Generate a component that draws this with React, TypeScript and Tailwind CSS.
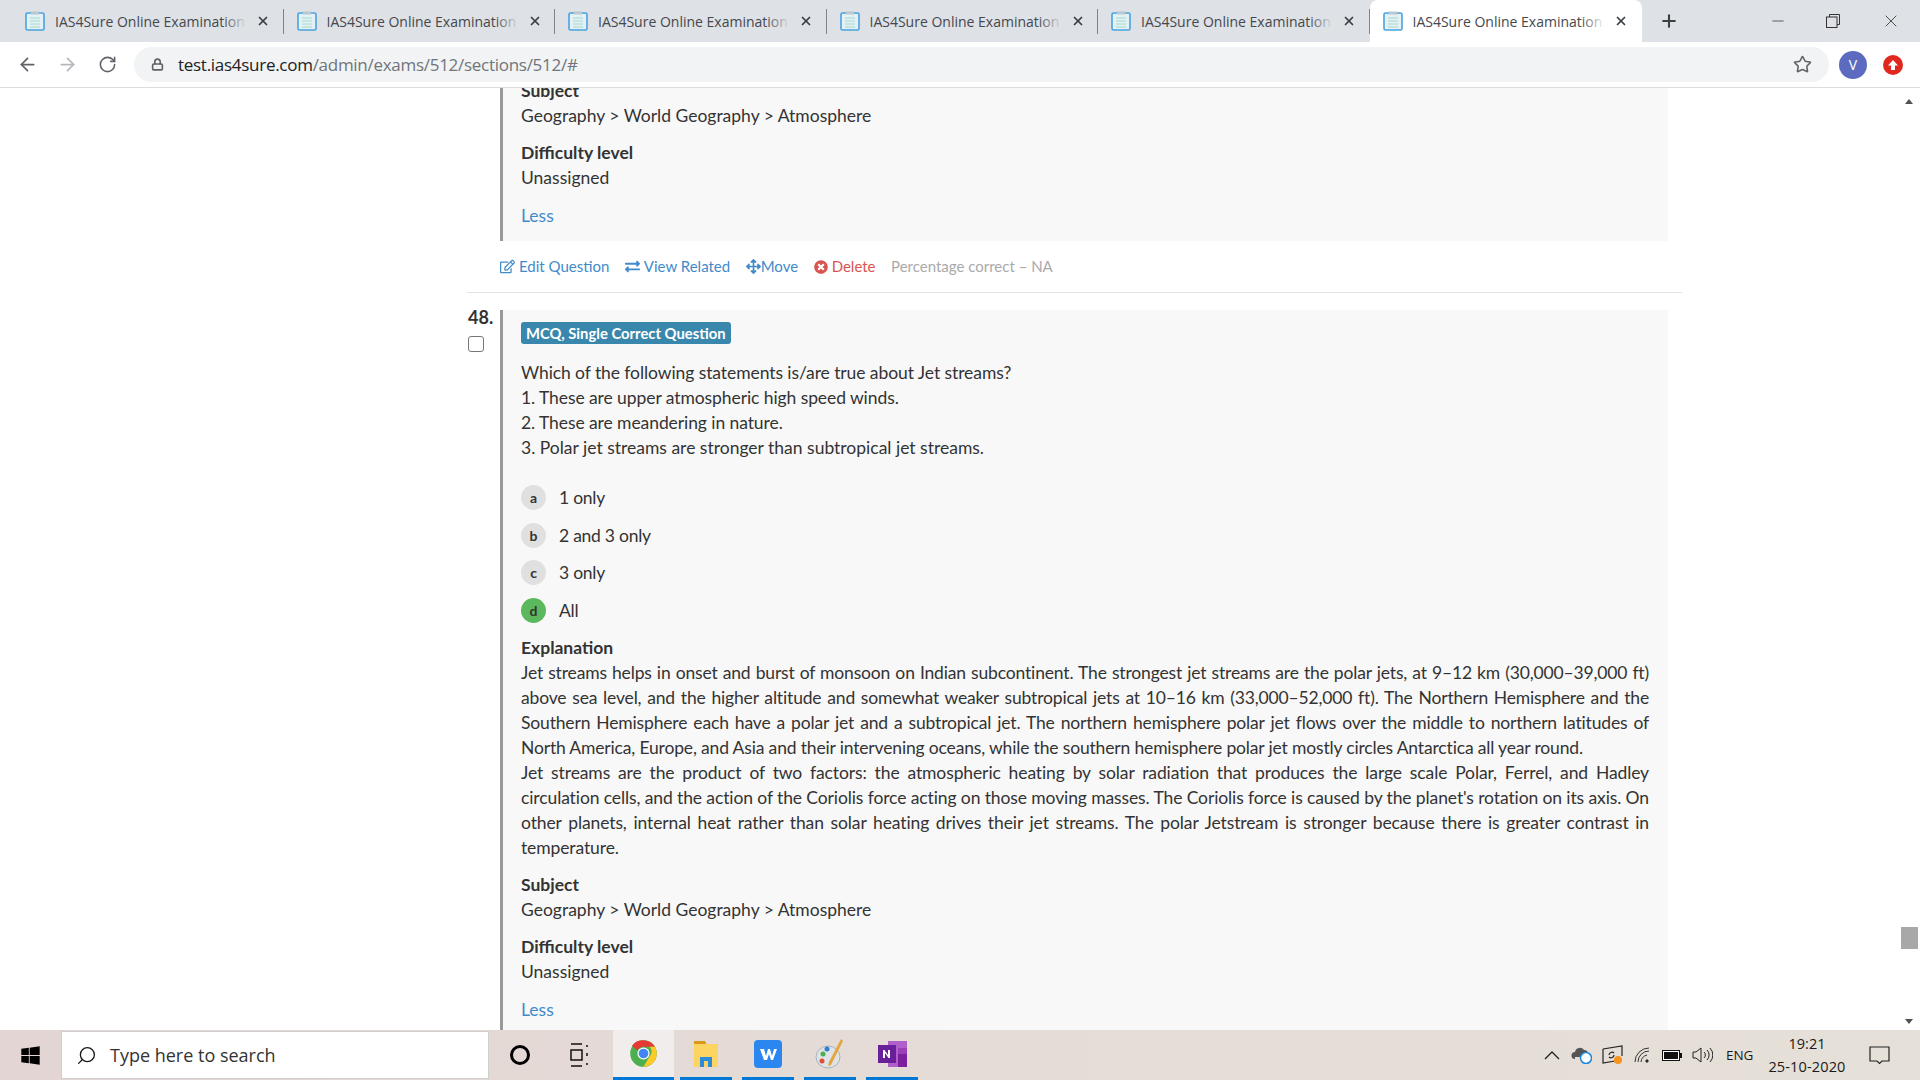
import type { ReactNode } from "react";
import { ArrowLeft, ArrowRight, Lock, Minus, Plus, RotateCw, Search, Star, X } from "lucide-react";
import { FaArrowsAlt, FaExchangeAlt, FaRegEdit, FaTimesCircle, FaWindows } from "react-icons/fa";

function Favicon() {
  return (
    <svg width="20" height="20" viewBox="0 0 20 20" className="shrink-0">
      <rect x="1" y="2" width="18" height="17" rx="1.5" fill="#e3f1f6" stroke="#4aa3de" strokeWidth="1.6" />
      <rect x="6" y="0.5" width="8" height="3" fill="#b9c9d2" />
      <path d="M5 7h10M5 10h10M5 13h10M5 16h10" stroke="#a6d8c8" strokeWidth="1" />
    </svg>
  );
}

function Tab({ active }: { active?: boolean }) {
  return (
    <div className={active ? "relative flex h-[42px] w-[272px] shrink-0 items-center rounded-t-lg bg-white pl-[13px]" : "relative flex h-[42px] w-[271.5px] shrink-0 items-center pl-[13px]"}>
      <Favicon />
      <div className="relative ml-[10px] w-[192px] overflow-hidden whitespace-nowrap text-[14px] text-[#45484d] font-['Open_Sans',sans-serif]">
        IAS4Sure Online Examination
        <div className={active ? "absolute inset-y-0 right-0 w-6 bg-gradient-to-r from-transparent to-white" : "absolute inset-y-0 right-0 w-6 bg-gradient-to-r from-transparent to-[#dee1e6]"} />
      </div>
      <X size={14} strokeWidth={3} className="ml-[9px] text-[#3c4043]" />
      {!active && <div className="absolute right-0 top-[9px] h-[25px] w-px bg-[#7f8388]" />}
    </div>
  );
}

function Browser() {
  return (
    <div className="shrink-0">
      <div className="flex h-[42px] items-end bg-[#dee1e6] pl-[12px]">
        <Tab />
        <Tab />
        <Tab />
        <Tab />
        <Tab />
        <Tab active />
        <Plus size={20} strokeWidth={2.5} className="ml-[17px] mb-[11px] text-[#3c4043]" />
        <div className="ml-auto flex h-full items-center">
          <Minus size={18} strokeWidth={1} className="mr-[39px] text-[#333]" />
          <svg width="14" height="14" viewBox="0 0 14 14" className="mr-[41px]" fill="none" stroke="#333">
            <path d="M3.5 3V.5h10v10H11" />
            <rect x=".5" y="3" width="10.5" height="10.5" />
          </svg>
          <X size={20} strokeWidth={1} className="mr-[19px] text-[#333]" />
        </div>
      </div>
      <div className="flex h-[46px] items-center border-b border-b-[#dadce0] bg-white pr-[17px]">
        <ArrowLeft size={21} className="ml-[17px] text-[#5f6368]" />
        <ArrowRight size={21} className="ml-[19px] text-[#b4b7bb]" />
        <RotateCw size={19} className="ml-[20px] text-[#5f6368]" />
        <div className="ml-[17px] flex h-[35px] flex-1 items-center rounded-full bg-[#f1f3f4] pl-[17px] pr-[17px]">
          <Lock size={13} strokeWidth={3} className="text-[#5f6368]" />
          <div className="ml-[14px] text-[17px] text-[#70757a] font-['Open_Sans',sans-serif] tracking-[-0.28px]">
            <span className="text-[#202124]">test.ias4sure.com</span>/admin/exams/512/sections/512/#
          </div>
          <Star size={19} className="ml-auto text-[#5f6368]" />
        </div>
        <div className="ml-[10px] flex h-[28px] w-[28px] items-center justify-center rounded-full bg-[#5c6bc0] text-[14px] text-white font-['Open_Sans',sans-serif]">V</div>
        <div className="ml-[16px] flex h-[20px] w-[20px] items-center justify-center rounded-full bg-[#e0281f]">
          <svg width="12" height="12" viewBox="0 0 12 12" fill="#fff"><path d="M6 1l5 5.500H8V11H4V6.500H1z" /></svg>
        </div>
      </div>
    </div>
  );
}

function Meta() {
  return (
    <>
      <div className="font-bold">Subject</div>
      <div>Geography &gt; World Geography &gt; Atmosphere</div>
      <div className="mt-[12px] font-bold">Difficulty level</div>
      <div>Unassigned</div>
      <div className="mt-[13px] text-[#428bca]">Less</div>
    </>
  );
}

function Option({ letter, text, correct }: { letter: string; text: string; correct?: boolean }) {
  return (
    <div className="flex h-[37.5px] items-center">
      <div className={correct ? "flex h-[25px] w-[25px] items-center justify-center rounded-full bg-[#5cb85c] text-[14px] font-bold" : "flex h-[25px] w-[25px] items-center justify-center rounded-full bg-[#e0e0e0] text-[14px] font-bold"}>
        {letter}
      </div>
      <div className="ml-[13px] tracking-[-0.25px]">{text}</div>
    </div>
  );
}

function Content() {
  return (
    <div className="relative flex-1 overflow-hidden bg-white font-['Lato',sans-serif] text-[17.5px] leading-[25px] text-[#333]">
      <div className="-mt-[10px] ml-[467px] w-[1215px]">
        <div className="ml-[33px] w-[1168px] border-l-[3px] border-l-[#999] bg-[#f8f8f8] pb-[13px] pl-[18px]">
          <Meta />
        </div>
        <div className="flex h-[52px] items-center gap-[15.5px] border-b border-b-[#e5e5e5] pl-[33px] text-[15px] text-[#428bca]">
          <span className="flex items-center gap-1"><FaRegEdit size={15} />Edit Question</span>
          <span className="flex items-center gap-1"><FaExchangeAlt size={15} />View Related</span>
          <span className="flex items-center"><FaArrowsAlt size={15} />Move</span>
          <span className="flex items-center gap-1 text-[#d9534f]"><FaTimesCircle size={14} />Delete</span>
          <span className="text-[#aaa]">Percentage correct – NA</span>
        </div>
        <div className="mt-[17px] flex">
          <div className="w-[33px] shrink-0 pl-px">
            <div className="-mt-[5px] text-[18px] font-bold">48.</div>
            <div className="mt-[6px] h-[16px] w-[16px] rounded-[3px] border border-[#767676] bg-white" />
          </div>
          <div className="w-[1168px] border-l-[3px] border-l-[#999] bg-[#f8f8f8] pb-[40px] pl-[18px] pr-[19px] pt-[10px]">
            <div className="inline-block h-[22px] rounded-[3px] bg-[#3a87ad] px-[5px] text-[14.8px] font-bold leading-[22px] text-white">
              MCQ, Single Correct Question
            </div>
            <div className="mt-[15px] tracking-[-0.08px]">Which of the following statements is/are true about Jet streams?</div>
            <div className="tracking-[-0.08px]">1. These are upper atmospheric high speed winds.</div>
            <div className="tracking-[-0.08px]">2. These are meandering in nature.</div>
            <div>3. Polar jet streams are stronger than subtropical jet streams.</div>
            <div className="mt-[19px]">
              <Option letter="a" text="1 only" />
              <Option letter="b" text="2 and 3 only" />
              <Option letter="c" text="3 only" />
              <Option letter="d" text="All" correct />
            </div>
            <div className="mt-[6px] font-bold">Explanation</div>
            <div className="text-justify tracking-[-0.16px]">
              Jet streams helps in onset and burst of monsoon on Indian subcontinent. The strongest jet streams are the polar jets, at 9–12 km (30,000–39,000 ft) above sea level, and the higher altitude and somewhat weaker subtropical jets at 10–16 km (33,000–52,000 ft). The Northern Hemisphere and the Southern Hemisphere each have a polar jet and a subtropical jet. The northern hemisphere polar jet flows over the middle to northern latitudes of North America, Europe, and Asia and their intervening oceans, while the southern hemisphere polar jet mostly circles Antarctica all year round.
            </div>
            <div className="text-justify tracking-[-0.11px]">
              Jet streams are the product of two factors: the atmospheric heating by solar radiation that produces the large scale Polar, Ferrel, and Hadley circulation cells, and the action of the Coriolis force acting on those moving masses. The Coriolis force is caused by the planet's rotation on its axis. On other planets, internal heat rather than solar heating drives their jet streams. The polar Jetstream is stronger because there is greater contrast in temperature.
            </div>
            <div className="mt-[12px]">
              <Meta />
            </div>
          </div>
        </div>
      </div>
      <div className="absolute inset-y-0 right-0 w-[21px] bg-white">
        <div className="absolute left-[6px] top-[11px] h-0 w-0 border-x-[4px] border-b-[5px] border-x-transparent border-b-[#505050]" />
        <div className="absolute left-[2px] top-[839px] h-[22px] w-[17px] bg-[#a8a8a8]" />
        <div className="absolute bottom-[6px] left-[6px] h-0 w-0 border-x-[4px] border-t-[5px] border-x-transparent border-t-[#505050]" />
      </div>
    </div>
  );
}

function AppSlot({ active, first, children }: { active?: boolean; first?: boolean; children: ReactNode }) {
  if (active) {
    return <div className="flex h-full w-[61px] items-center justify-center border-b-[3px] border-b-[#0078d7] bg-[#f2eded]">{children}</div>;
  }
  return (
    <div className={first ? "ml-[6px] flex h-full w-[52px] items-center justify-center border-b-[3px] border-b-[#0078d7]" : "ml-[10px] flex h-full w-[52px] items-center justify-center border-b-[3px] border-b-[#0078d7]"}>
      {children}
    </div>
  );
}

function Taskbar() {
  return (
    <div className="flex h-[50px] shrink-0 items-center bg-gradient-to-r from-[#e3d5d3] via-[#e5dcd7] to-[#e5e0d8] font-['Open_Sans',sans-serif] text-[#1a1a1a]">
      <FaWindows size={21} className="ml-[20px] text-black" />
      <div className="ml-[20px] flex h-[48px] w-[428px] items-center border border-[#cfcfcf] bg-white pl-[14px]">
        <Search size={21} strokeWidth={1.5} className="-scale-x-100" />
        <span className="ml-[13px] text-[18px] text-[#333]">Type here to search</span>
      </div>
      <div className="ml-[21px] h-[20px] w-[20px] rounded-full border-[3px] border-black" />
      <svg width="20" height="24" viewBox="0 0 20 24" className="ml-[40px]" fill="none" stroke="#111" strokeWidth="1.5">
        <path d="M1 1h11M1 23h11M1 7h11v10H1zM17 2v2M17 10v3M17 20v2" />
      </svg>
      <div className="ml-[23px] flex h-full items-center">
        <AppSlot active>
          <svg width="29" height="29" viewBox="0 0 48 48">
            <circle cx="24" cy="24" r="22" fill="#4caf50" />
            <path d="M24 2a22 22 0 0 1 19 11H24a11 11 0 0 0-10 6L5 11A22 22 0 0 1 24 2z" fill="#e53935" />
            <path d="M43 13a22 22 0 0 1-19 33l10-17a11 11 0 0 0 0-16z" fill="#ffca28" />
            <circle cx="24" cy="24" r="10" fill="#fff" />
            <circle cx="24" cy="24" r="8" fill="#4285f4" />
          </svg>
        </AppSlot>
        <AppSlot first>
          <svg width="28" height="28" viewBox="0 0 28 28">
            <path d="M2 1h11l2 4H2z" fill="#d99a1c" />
            <rect x="2" y="4" width="24" height="23" fill="#fcd462" />
            <path d="M8 27V17h12v10h-4v-6h-4v6z" fill="#2e8bd9" />
          </svg>
        </AppSlot>
        <AppSlot>
          <svg width="28" height="28" viewBox="0 0 28 28">
            <rect width="28" height="28" rx="4" fill="#2b86f0" />
            <path d="M6 9h4l2 7 2-7h2l2 7 2-7h3l-4 11h-2l-2-6-2 6h-3z" fill="#fff" />
          </svg>
        </AppSlot>
        <AppSlot>
          <svg width="30" height="32" viewBox="0 0 30 32">
            <ellipse cx="13" cy="19" rx="12" ry="11" fill="#dfe3e6" stroke="#a9b4bb" />
            <circle cx="8" cy="16" r="2.500" fill="#4caf50" />
            <circle cx="12" cy="11" r="2.500" fill="#2f80d0" />
            <circle cx="7" cy="23" r="2.500" fill="#e04f3a" />
            <path d="M26 1l2 2-12 24-3 1 1-4z" fill="#e3a63d" />
          </svg>
        </AppSlot>
        <AppSlot>
          <svg width="31" height="28" viewBox="0 0 31 28">
            <rect x="11" y="1" width="19" height="26" fill="#b15fc9" />
            <rect x="21" y="8" width="9" height="6" fill="#9c3fb8" />
            <rect x="21" y="14" width="9" height="13" fill="#7d1f9f" />
            <rect x="1" y="5" width="18" height="18" fill="#6a1f9a" />
            <path d="M6 18V10h1.500l3.500 5v-5h2v8h-1.500L8 13v5z" fill="#fff" />
          </svg>
        </AppSlot>
      </div>
      <div className="ml-auto flex h-full items-center">
        <svg width="16" height="9" viewBox="0 0 16 9" fill="none" stroke="#222" strokeWidth="1.3"><path d="M1 8l7-7 7 7" /></svg>
        <svg width="21" height="18" viewBox="0 0 21 18" className="ml-[11px]">
          <path d="M4 13a3.500 3.500 0 0 1 0-7 5 5 0 0 1 9-2 4 4 0 0 1 4 4v3H4z" fill="#555" />
          <circle cx="15" cy="12" r="5.500" fill="#fff" stroke="#1b87e0" strokeWidth="1.500" />
        </svg>
        <svg width="21" height="20" viewBox="0 0 21 20" className="ml-[10px]" fill="none" stroke="#222" strokeWidth="1.2">
          <path d="M1 4l19-3v10M1 4v14l12-2" />
          <path d="M7 10a3 3 0 0 1 5-2M12 10a3 3 0 0 1-5 2" />
          <circle cx="16" cy="15" r="4" fill="#f7931e" stroke="none" />
        </svg>
        <svg width="16" height="16" viewBox="0 0 16 16" className="ml-[11px]" fill="none" stroke="#333" strokeWidth="1">
          <path d="M1 15A14 14 0 0 1 15 1M4 15A11 11 0 0 1 15 4M7 15a8 8 0 0 1 6-7" />
          <circle cx="13" cy="14" r="1.200" fill="#222" />
        </svg>
        <svg width="20" height="11" viewBox="0 0 20 11" className="ml-[12px]">
          <rect x=".5" y=".5" width="17" height="10" fill="#fff" stroke="#111" />
          <rect x="2" y="2" width="14" height="7" fill="#111" />
          <rect x="18" y="3" width="2" height="5" fill="#111" />
        </svg>
        <svg width="21" height="16" viewBox="0 0 21 16" className="ml-[10px]" fill="none" stroke="#222" strokeWidth="1">
          <path d="M1 5h3l5-4v14l-5-4H1zM12 5a4 4 0 0 1 0 6M15 3a7 7 0 0 1 0 10M18 1a10 10 0 0 1 0 14" />
        </svg>
        <span className="ml-[13px] text-[13.5px] tracking-[-0.2px]">ENG</span>
        <div className="ml-[8px] flex w-[92px] flex-col items-center text-[14.5px] leading-[23px]">
          <span>19:21</span>
          <span className="tracking-[0.15px]">25-10-2020</span>
        </div>
        <svg width="21" height="19" viewBox="0 0 21 19" className="ml-[16px] mr-[30px]" fill="none" stroke="#222" strokeWidth="1.2">
          <path d="M1 1h19v14h-7l-2.500 2.500L8 15H1z" />
        </svg>
      </div>
    </div>
  );
}

export default function App() {
  return (
    <div className="flex h-screen flex-col overflow-hidden">
      <Browser />
      <Content />
      <Taskbar />
    </div>
  );
}
